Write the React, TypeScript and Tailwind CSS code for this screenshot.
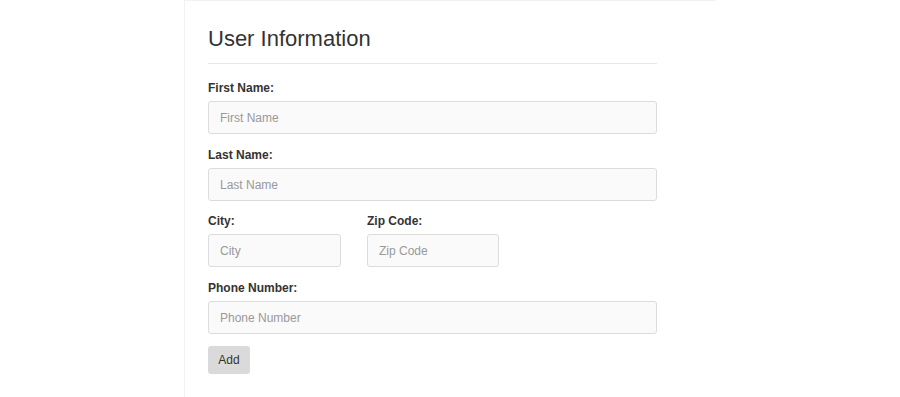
export default function App() {
  return (
    <div className="min-h-[397px] bg-white font-['Liberation_Sans',Arial,sans-serif] text-[#333]">
      <div className="ml-[184px] w-[532px] min-h-[397px] border-l border-t border-[#f2f2f2] pl-[23px] pt-[26px]">
        <h3 className="text-[22px] leading-[24px] font-normal text-[#333]">User Information</h3>
        <hr className="mt-[12px] w-[449px] border-0 border-t border-[#e8e8e8]" />

        <form className="w-[449px] pt-4" onSubmit={(e) => e.preventDefault()}>
          <Field label="First Name:" placeholder="First Name" />
          <Field label="Last Name:" placeholder="Last Name" gap="mb-[12px]" />

          <div className="flex gap-[26px]">
            <Field label="City:" placeholder="City" width="w-[133px]" />
            <Field label="Zip Code:" placeholder="Zip Code" width="w-[132px]" />
          </div>

          <Field label="Phone Number:" placeholder="Phone Number" />

          <button
            type="submit"
            className="mt-[-1px] h-[28px] w-[42px] rounded-[3px] bg-[#dadada] text-[12px] text-[#333]"
          >
            Add
          </button>
        </form>
      </div>
    </div>
  );
}

function Field({
  label,
  placeholder,
  width = "w-full",
  gap = "mb-[13px]",
}: {
  label: string;
  placeholder: string;
  width?: string;
  gap?: string;
}) {
  return (
    <div className={gap}>
      <label className="mb-1 block text-[12px] leading-[17px] font-bold text-[#333]">{label}</label>
      <input
        type="text"
        placeholder={placeholder}
        className={`${width} block h-[33px] rounded-[3px] border border-[#dcdcdc] bg-[#fafafa] px-[11px] text-[12px] text-[#333] placeholder:text-[#999] outline-none`}
      />
    </div>
  );
}
